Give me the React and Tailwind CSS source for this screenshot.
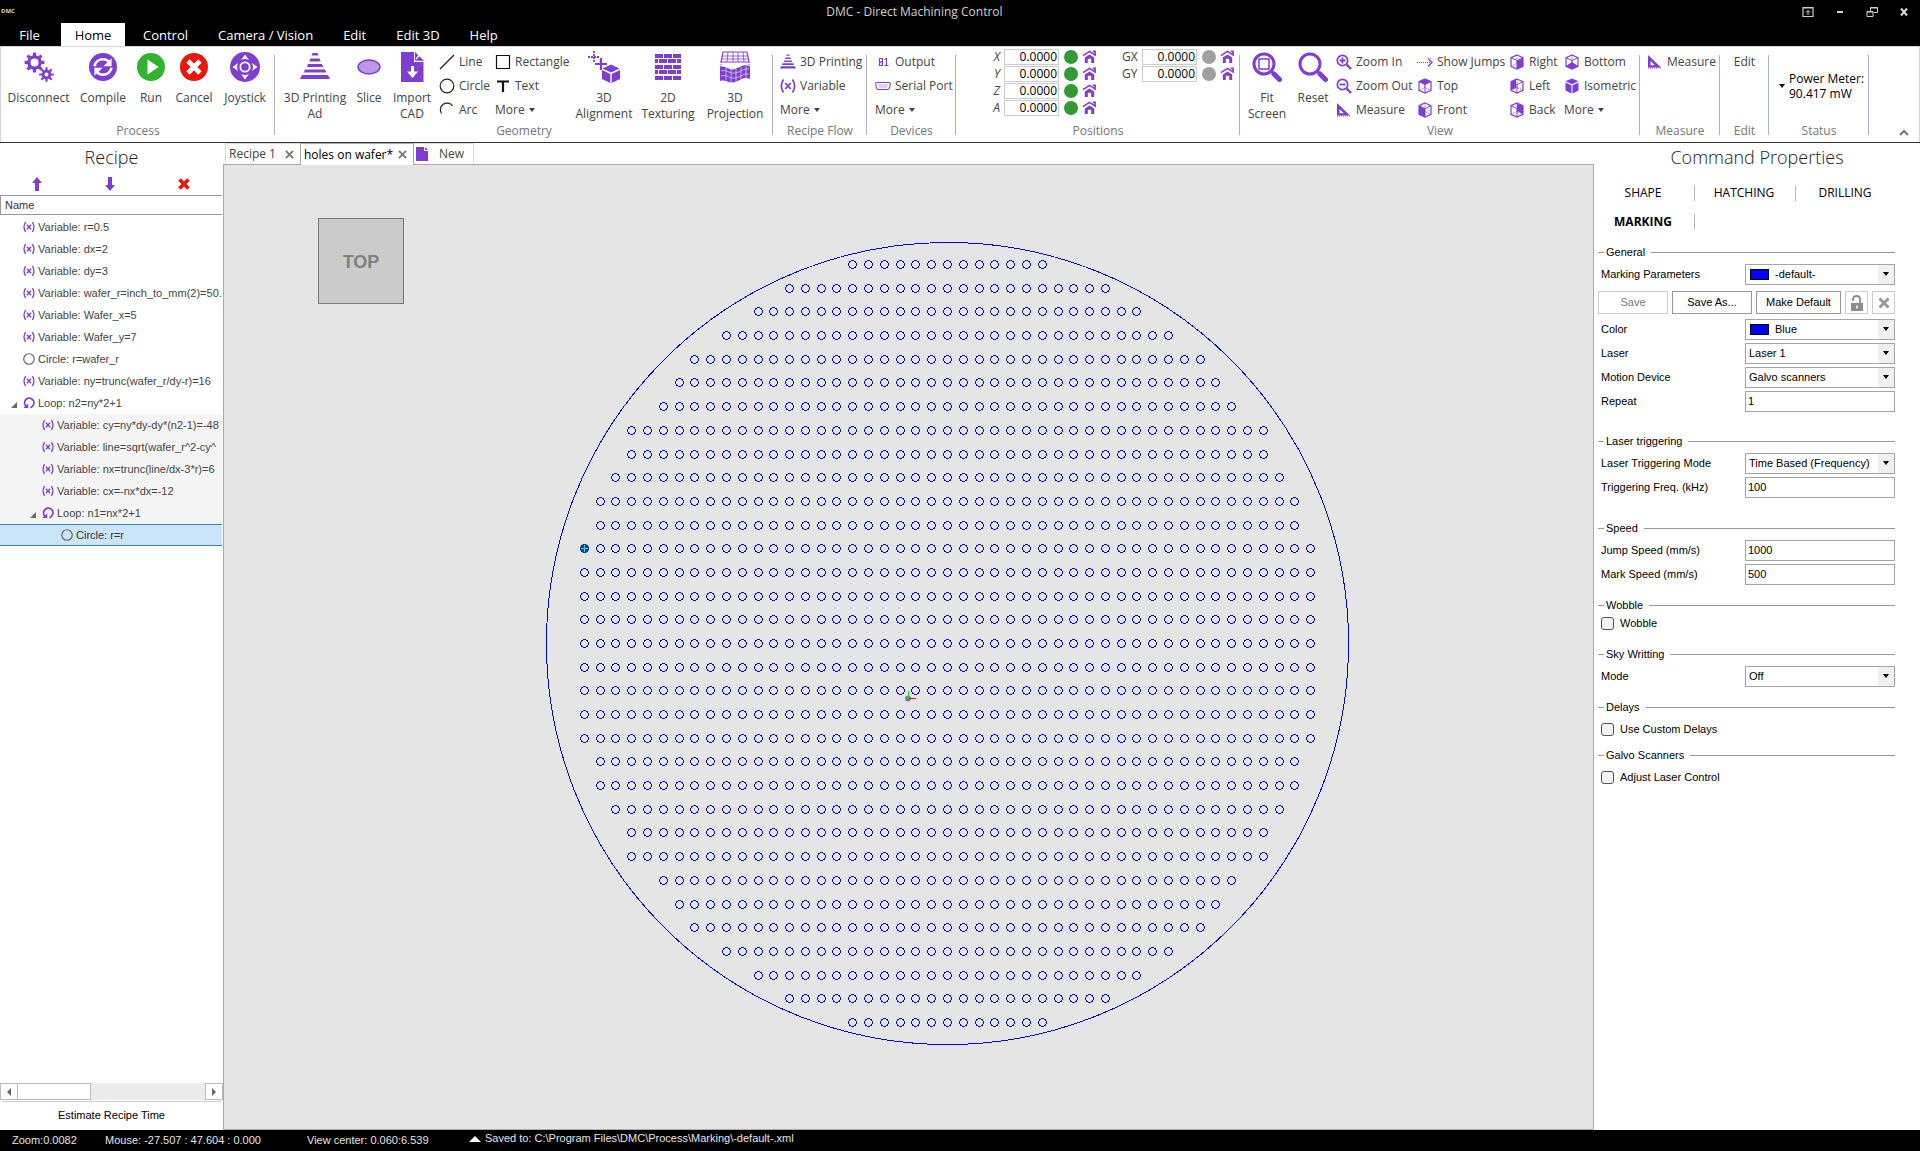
import React from "react";

const P = "#7e3fd0";

/* ---------- large ribbon icons ---------- */

function gearPath(cx, cy, rOuter, rInner, teeth) {
  const pts = [];
  const step = (Math.PI * 2) / teeth;
  for (let i = 0; i < teeth; i++) {
    const a = i * step - Math.PI / 2;
    [
      [-0.3, rInner],
      [-0.18, rOuter],
      [0.18, rOuter],
      [0.3, rInner],
    ].forEach(([o, r]) => {
      pts.push(`${(cx + Math.cos(a + o * step) * r).toFixed(2)} ${(cy + Math.sin(a + o * step) * r).toFixed(2)}`);
    });
  }
  return `M${pts.join("L")}Z`;
}

function Gears() {
  return (
    <svg viewBox="0 0 30 30" className="size-[30px]">
      <path d={`${gearPath(10.5, 10.5, 10, 7.2, 8)}M14.500 10.5a4 4 0 1 0 -8 0a4 4 0 1 0 8 0Z`} fill={P} fillRule="evenodd" />
      <path d={`${gearPath(22.5, 22.5, 7.4, 4.8, 8)}M24.500 22.5a2 2 0 1 0 -4 0a2 2 0 1 0 4 0Z`} fill={P} fillRule="evenodd" />
    </svg>
  );
}

function Compile() {
  return (
    <svg viewBox="0 0 30 30" className="size-[30px]">
      <circle cx="15" cy="15" r="14" fill={P} />
      <g fill="none" stroke="#fff" strokeWidth="2.6">
        <path d="M6.6 14.2C7.4 9.6 11 7.2 15 7.2c2.600 0 4.600 1 6.200 2.800" />
        <path d="M23.400 15.800C22.600 20.400 19 22.800 15 22.800c-2.600 0-4.600-1-6.200-2.800" />
      </g>
      <path d="M23.600 6.200v8h-8.200zM6.400 23.800v-8h8.200z" fill="#fff" />
    </svg>
  );
}

function Run() {
  return (
    <svg viewBox="0 0 30 30" className="size-[30px]">
      <circle cx="15" cy="15" r="14" fill="#33b133" />
      <path d="M11.500 7.500v15L22.500 15z" fill="#fff" />
    </svg>
  );
}

function Cancel() {
  return (
    <svg viewBox="0 0 30 30" className="size-[30px]">
      <circle cx="15" cy="15" r="14" fill="#e81709" />
      <path d="M9 9l12 12M21 9L9 21" stroke="#fff" strokeWidth="4.600" />
    </svg>
  );
}

function Joystick() {
  return (
    <svg viewBox="0 0 30 30" className="size-[30px]">
      <circle cx="15" cy="15" r="15" fill={P} />
      <circle cx="15" cy="15" r="4.700" fill="none" stroke="#fff" strokeWidth="1.800" />
      <path d="M15 2.500l4 5.500q-4-2-8 0zM15 27.500l4-5.500q-4 2-8 0zM2.500 15l5.500-4q-2 4 0 8zM27.500 15l-5.500-4q2 4 0 8z" fill="#fff" />
    </svg>
  );
}

function Cone({ size = "size-[30px]" }) {
  return (
    <svg viewBox="0 0 30 30" className={size}>
      <path d="M12.500 1h5l1 2.500h-7zM10.500 6.500h9l1.200 3h-11.400zM8 12h14l1.200 3h-16.400zM5 17.500h20l1.200 3h-22.400zM2 23h26l2 4h-30z" fill={P} />
    </svg>
  );
}

function Slice() {
  return (
    <svg viewBox="0 0 30 30" className="size-[30px]">
      <ellipse cx="15" cy="15" rx="11" ry="7" fill="#bd97e8" stroke={P} strokeWidth="1.400" />
    </svg>
  );
}

function ImportCad() {
  return (
    <svg viewBox="0 0 30 30" className="size-[30px]">
      <path d="M4 0h13v10h9.500v20H4z" fill={P} />
      <path d="M18 8.500V0L27 9z" fill={P} />
      <path d="M20.500 0l2.500 2.500-4 4.500M21 0l6 6.500" stroke="#fff" strokeWidth="1.200" fill="none" />
      <path d="M14 14h3v5.500h4L15.500 26 10 19.500h4z" fill="#fff" />
    </svg>
  );
}

function Align3D() {
  return (
    <svg viewBox="0 0 34 34" className="size-[34px]">
      <path d="M7 1v12M1 7h12" stroke={P} strokeWidth="1.800" strokeDasharray="2 1" />
      <path d="M14 8v12M8 14h12" stroke={P} strokeWidth="2.200" />
      <path d="M24 14.500l8.500 4-8.500 4-8.500-4z" fill={P} />
      <path d="M15 20l8.300 4v9L15 29zM33 20l-8.300 4v9L33 29z" fill={P} />
    </svg>
  );
}

function Bricks() {
  return (
    <svg viewBox="0 0 30 30" className="size-[30px]">
      <g fill={P} shapeRendering="crispEdges">
        {[0, 1, 2, 3, 4].map((r) =>
          (r % 2 === 0 ? [[2, 8], [11, 8], [20, 8]] : [[2, 3], [6, 8], [15, 8], [24, 4]]).map(([x, w]) => (
            <rect key={`${r}-${x}`} x={x} y={2 + r * 5 + Math.floor(r / 2)} width={w} height="4" />
          ))
        )}
      </g>
    </svg>
  );
}

function Projection() {
  return (
    <svg viewBox="0 0 34 34" className="size-[34px]">
      <path d="M5 2h24l2 10H3z" fill="none" stroke={P} strokeWidth="1.200" />
      <path d="M4 6h26M4 9h26M10 2l-1 10M15 2v10M20 2v10M25 2l1 10" stroke={P} strokeWidth="0.800" />
      <path d="M2 17c6-2 9 4 15 2s8-5 15-3v13c-6-3-9 1-15 3s-9-3-15-1z" fill={P} />
      <path d="M3 21c6-2 8 3 14 2s9-5 14-4M3 26c6-2 8 3 14 2s9-5 14-4M8 17v13M13 19v13M18 19v13M23 17v13M28 16v12" fill="none" stroke="#d9c6f2" strokeWidth="0.800" />
      <path d="M3 12v5M31 12v4" stroke={P} strokeDasharray="1 1" />
    </svg>
  );
}

function FitScreen() {
  return (
    <svg viewBox="0 0 30 30" className="size-[30px]">
      <circle cx="12" cy="12" r="10" fill="none" stroke={P} strokeWidth="3" />
      <rect x="7" y="7" width="10" height="10" fill="none" stroke={P} strokeWidth="1.500" />
      <path d="M19 19l2 2" stroke={P} strokeWidth="2.500" />
      <path d="M22 22l5.500 5.500" stroke={P} strokeWidth="5" strokeLinecap="round" />
    </svg>
  );
}

function Reset() {
  return (
    <svg viewBox="0 0 30 30" className="size-[30px]">
      <circle cx="12" cy="12" r="10" fill="none" stroke={P} strokeWidth="3" />
      <path d="M19 19l2 2" stroke={P} strokeWidth="2.500" />
      <path d="M22 22l5.500 5.500" stroke={P} strokeWidth="5" strokeLinecap="round" />
    </svg>
  );
}

/* ---------- small icons ---------- */

function Svg16({ children, className = "size-4" }) {
  return (
    <svg viewBox="0 0 16 16" className={`${className} shrink-0`} fill="none">
      {children}
    </svg>
  );
}
const LineI = () => <Svg16><path d="M1 15L15 1" stroke="#222" strokeWidth="1.300" /></Svg16>;
const CircleI = () => <Svg16><circle cx="8" cy="8" r="6.800" stroke="#222" strokeWidth="1.200" /></Svg16>;
const ArcI = () => <Svg16><path d="M2.500 11.500A6.500 6.500 0 0 1 13.500 4" stroke="#222" strokeWidth="1.200" /></Svg16>;
const RectI = () => <Svg16><path d="M1.500 1.500h13v13h-13z" stroke="#111" strokeWidth="1.200" /></Svg16>;
const TextI = () => <Svg16><path d="M2 3.500h12M8 3v11" stroke="#111" strokeWidth="2.200" /></Svg16>;
const ConeI = () => <Cone size="size-4" />;
const VarI = ({ className }) => (
  <Svg16 className={className}>
    <path d="M3.500 1.500Q-0.800 8 3.500 14.500M12.500 1.500Q16.800 8 12.500 14.500" stroke={P} strokeWidth="1.700" />
    <path d="M5.200 5l5.600 6M10.800 5l-5.600 6" stroke={P} strokeWidth="1.800" />
  </Svg16>
);
const OutputI = () => (
  <Svg16>
    <path d="M4.500 4.500h3v7h-3zM4.500 9l3-2M9.500 5.500l2-1v7M9.500 11.500h4" stroke={P} strokeWidth="1.200" />
  </Svg16>
);
const SerialI = () => (
  <Svg16>
    <path d="M2 4.500h12q1.500 0 1.300 1.500l-.8 4q-.300 1.500-2 1.500h-9q-1.700 0-2-1.500l-.8-4q-.200-1.500 1.300-1.500z" stroke={P} strokeWidth="1.100" />
    <path d="M3.500 7h9M4.500 9h7" stroke={P} strokeWidth="1" strokeDasharray="1 1" />
  </Svg16>
);
const Zoomer = ({ plus }) => (
  <Svg16>
    <circle cx="6.500" cy="6.500" r="5.200" stroke={P} strokeWidth="1.700" />
    <path d={plus ? "M3.500 6.500h6M6.500 3.500v6" : "M3.500 6.500h6"} stroke={P} strokeWidth="1.800" />
    <path d="M10.500 10.500l4.500 4.500" stroke={P} strokeWidth="2.400" />
  </Svg16>
);
const MeasureI = () => (
  <Svg16>
    <path d="M1 1v12.500h13z M3.500 7v4.200h4.300z" fill={P} fillRule="evenodd" />
    <path d="M1 14h14" stroke={P} strokeDasharray="1 1" />
  </Svg16>
);
const JumpI = () => (
  <Svg16>
    <path d="M0 8.500h13" stroke={P} strokeWidth="1" strokeDasharray="1 1" />
    <path d="M11 4.500l4 4-4 4" stroke={P} strokeWidth="1.300" />
  </Svg16>
);
const CUBE_FACES = {
  top: ["M8 1l6 2.500-6 3-6-3z"],
  front: ["M2 4l6 3v8l-6-3z"],
  right: ["M14 4L8 7v8l6-3z"],
  left: ["M2 4l5-3v9l-5 2z"],
  back: ["M8 1.500l6 2.500v8l-6-3z"],
  bottom: ["M8 8l6 4-6 3-6-3z"],
  iso: ["M8 0.500l6.500 2.800L8 6.200 1.500 3.300z", "M1.500 4.500l6 2.800V15.500l-6-3z", "M14.500 4.500l-6 2.800V15.500l6-3z"],
};
const CubeI = ({ face }) => (
  <Svg16>
    {face !== "iso" && (
      <>
        <path d="M8 1l6 2.700v8.600L8 15l-6-2.700V3.700z" stroke={P} strokeWidth="1.200" />
        <path d="M2 3.700l6 2.800 6-2.800M8 6.500V15" stroke={P} strokeWidth="1" />
        <path d="M2 12.300L8 9.500l6 2.800M8 1v8.500" stroke={P} strokeWidth="0.800" strokeDasharray="1.500 1" />
      </>
    )}
    {CUBE_FACES[face].map((d) => <path key={d} d={d} fill={P} />)}
  </Svg16>
);
const HomeI = () => (
  <Svg16 className="size-[15px]">
    <path d="M1 7L8 2.500 15 7M11.500 2.500H14V6" stroke={P} strokeWidth="1.700" />
    <path d="M3 9l5-3.200L13 9v6h-3.200v-4.500H6.200V15H3z" fill={P} />
  </Svg16>
);
const LoopI = () => (
  <Svg16 className="size-3">
    <path d="M4.800 13A6.300 6.300 0 1 1 12.500 12.500L10 14.500" stroke={P} strokeWidth="2.200" />
    <path d="M0.500 14.800h6.500V8.500z" fill={P} />
  </Svg16>
);
const Caret = ({ className = "" }) => (
  <svg viewBox="0 0 6 4" className={`h-1 w-1.5 shrink-0 ${className}`}><path d="M0 0h6L3 4z" fill="currentColor" /></svg>
);

/* ---------- ribbon pieces ---------- */

function Group({ label, width, pad = "", children }) {
  return (
    <section aria-label={label} className={`relative flex shrink-0 flex-col ${width}`}>
      <div className={`flex h-[76px] pt-[3px] ${pad}`}>{children}</div>
      <div className="text-center text-[12px] leading-4 text-[#777]">{label}</div>
      <div className="absolute top-2 right-0 h-20 w-px bg-[#a3b3d1]" />
    </section>
  );
}

function Big({ icon: Icon, lines, width }) {
  return (
    <button type="button" className={`flex h-[72px] shrink-0 flex-col items-center ${width}`}>
      <span className="flex h-[34px] items-center justify-center"><Icon /></span>
      <span className="mt-[6px] text-[12px] leading-4 whitespace-nowrap">
        {lines.map((l) => <span key={l} className="block">{l}</span>)}
      </span>
    </button>
  );
}

function Small({ icon, label }) {
  return (
    <button type="button" className="flex h-6 items-center gap-1 text-[12px] whitespace-nowrap">
      {icon}
      <span>{label}</span>
      {label === "More" && <Caret />}
    </button>
  );
}

function Column({ width, children }) {
  return <div className={`flex shrink-0 flex-col items-start ${width}`}>{children}</div>;
}

function Axis({ name, italic, on, labelWidth }) {
  const id = `axis-${name}`;
  return (
    <div className="flex h-[17px] items-center">
      <label htmlFor={id} className={`text-[12px] leading-4 ${labelWidth} ${italic ? "pr-1 text-right italic" : ""}`}>{name}</label>
      <input id={id} defaultValue="0.0000" className="h-4 w-[55px] border border-[#ccc] bg-white pr-px text-right text-[12px] text-black outline-none" />
      <span className={`mr-1 ml-[5px] size-[14px] rounded-full ${on ? "bg-[#339933]" : "bg-[#a0a0a0]"}`} />
      <button type="button" aria-label={`Home ${name}`}><HomeI /></button>
    </div>
  );
}

function Ribbon() {
  return (
    <div className="flex h-24 shrink-0 border border-b-0 border-[#d5d5d5] bg-white text-[#444]">
      <Group label="Process" width="w-[274px]" pad="pl-[5px]">
        <Big icon={Gears} lines={["Disconnect"]} width="w-[65px]" />
        <Big icon={Compile} lines={["Compile"]} width="w-16" />
        <Big icon={Run} lines={["Run"]} width="w-8" />
        <Big icon={Cancel} lines={["Cancel"]} width="w-[54px]" />
        <Big icon={Joystick} lines={["Joystick"]} width="w-12" />
      </Group>
      <Group label="Geometry" width="w-[498px]" pad="pl-2">
        <Big icon={Cone} lines={["3D Printing", "Ad"]} width="w-16" />
        <Big icon={Slice} lines={["Slice"]} width="w-11" />
        <Big icon={ImportCad} lines={["Import", "CAD"]} width="w-[42px]" />
        <Column width="w-14 ml-1.5">
          <Small icon={<LineI />} label="Line" />
          <Small icon={<CircleI />} label="Circle" />
          <Small icon={<ArcI />} label="Arc" />
        </Column>
        <Column width="w-20">
          <Small icon={<RectI />} label="Rectangle" />
          <Small icon={<TextI />} label="Text" />
          <Small label="More" />
        </Column>
        <Big icon={Align3D} lines={["3D", "Alignment"]} width="w-[58px]" />
        <Big icon={Bricks} lines={["2D", "Texturing"]} width="w-[70px]" />
        <Big icon={Projection} lines={["3D", "Projection"]} width="w-16" />
      </Group>
      <Group label="Recipe Flow" width="w-[94px]" pad="pl-[7px]">
        <Column width="w-20">
          <Small icon={<ConeI />} label="3D Printing" />
          <Small icon={<VarI className="size-4" />} label="Variable" />
          <Small label="More" />
        </Column>
      </Group>
      <Group label="Devices" width="w-[89px]" pad="pl-2">
        <Column width="w-20">
          <Small icon={<OutputI />} label="Output" />
          <Small icon={<SerialI />} label="Serial Port" />
          <Small label="More" />
        </Column>
      </Group>
      <Group label="Positions" width="w-[284px]" pad="pl-8">
        <div className="-mt-0.5">
          <Axis name="X" italic on labelWidth="w-4" />
          <Axis name="Y" italic on labelWidth="w-4" />
          <Axis name="Z" italic on labelWidth="w-4" />
          <Axis name="A" italic on labelWidth="w-4" />
        </div>
        <div className="-mt-0.5 ml-[25px]">
          <Axis name="GX" labelWidth="w-5" />
          <Axis name="GY" labelWidth="w-5" />
        </div>
      </Group>
      <Group label="View" width="w-[400px]" pad="pl-1">
        <Big icon={FitScreen} lines={["Fit", "Screen"]} width="w-[46px]" />
        <Big icon={Reset} lines={["Reset"]} width="w-[46px]" />
        <Column width="w-[81px]">
          <Small icon={<Zoomer plus />} label="Zoom In" />
          <Small icon={<Zoomer />} label="Zoom Out" />
          <Small icon={<MeasureI />} label="Measure" />
        </Column>
        <Column width="w-[92px]">
          <Small icon={<JumpI />} label="Show Jumps" />
          <Small icon={<CubeI face="top" />} label="Top" />
          <Small icon={<CubeI face="front" />} label="Front" />
        </Column>
        <Column width="w-[55px]">
          <Small icon={<CubeI face="right" />} label="Right" />
          <Small icon={<CubeI face="left" />} label="Left" />
          <Small icon={<CubeI face="back" />} label="Back" />
        </Column>
        <Column width="w-[72px]">
          <Small icon={<CubeI face="bottom" />} label="Bottom" />
          <Small icon={<CubeI face="iso" />} label="Isometric" />
          <Small label="More" />
        </Column>
      </Group>
      <Group label="Measure" width="w-20" pad="pl-[7px]">
        <Column width="w-16">
          <Small icon={<MeasureI />} label="Measure" />
        </Column>
      </Group>
      <Group label="Edit" width="w-[49px]">
        <div className="flex w-full items-start justify-center"><Small label="Edit" /></div>
      </Group>
      <Group label="Status" width="w-[100px]" pad="pl-[10px]">
        <button type="button" className="mt-[18px] flex h-9 items-center gap-1 text-left text-[12px] leading-[15px] whitespace-nowrap text-black">
          <Caret />
          <span>Power Meter:<br />90.417 mW</span>
        </button>
      </Group>
      <div className="flex grow items-end justify-end pr-[10px] pb-[5px]">
        <button type="button" aria-label="Collapse ribbon" className="text-[#777]">
          <svg viewBox="0 0 10 10" className="size-[10px]"><path d="M1 8l4-4 4 4" fill="none" stroke="currentColor" strokeWidth="2" /></svg>
        </button>
      </div>
    </div>
  );
}

function TitleBar() {
  return (
    <header className="flex h-[23px] shrink-0 items-center bg-black text-[#d0d0d0]">
      <span className="pl-px text-[6px] font-bold">DMC</span>
      <h1 className="grow pl-3 text-center text-[12px]">DMC - Direct Machining Control</h1>
      <div className="flex justify-end gap-5 pr-[10px]">
        <button type="button" aria-label="Ribbon display options">
          <svg viewBox="0 0 12 12" className="size-3" fill="none" stroke="currentColor"><path d="M1 1.500h10v9H1z" strokeWidth="1.200" /><path d="M1 2h10M6 9V4.500M4 6.500l2-2 2 2" /></svg>
        </button>
        <button type="button" aria-label="Minimize">
          <svg viewBox="0 0 12 12" className="size-3"><path d="M3 6h6" stroke="currentColor" strokeWidth="2" /></svg>
        </button>
        <button type="button" aria-label="Restore">
          <svg viewBox="0 0 12 12" className="size-3" fill="none" stroke="currentColor"><path d="M1 5.500h6v5H1zM1 6h6M4.500 5V1.500h7v5H7.500M4.500 2h7" /></svg>
        </button>
        <button type="button" aria-label="Close">
          <svg viewBox="0 0 12 12" className="size-3"><path d="M3 2.500l6 7M9 2.500l-6 7" stroke="currentColor" strokeWidth="2.200" /></svg>
        </button>
      </div>
    </header>
  );
}

function MenuTabs() {
  const items = ["Control", "Camera / Vision", "Edit", "Edit 3D", "Help"];
  return (
    <nav className="flex h-[23px] shrink-0 bg-black text-[13px] leading-6 text-white">
      <button type="button" className="w-[61px] pr-0.5 pb-1">File</button>
      <button type="button" className="mr-[3px] w-16 bg-white text-black">Home</button>
      {items.map((t) => <button type="button" key={t} className="px-[15px] whitespace-nowrap">{t}</button>)}
    </nav>
  );
}

/* ---------- recipe panel ---------- */

const ROWS = [
  ["var", 0, "Variable: r=0.5"],
  ["var", 0, "Variable: dx=2"],
  ["var", 0, "Variable: dy=3"],
  ["var", 0, "Variable: wafer_r=inch_to_mm(2)=50."],
  ["var", 0, "Variable: Wafer_x=5"],
  ["var", 0, "Variable: Wafer_y=7"],
  ["circle", 0, "Circle: r=wafer_r"],
  ["var", 0, "Variable: ny=trunc(wafer_r/dy-r)=16"],
  ["loop", 0, "Loop: n2=ny*2+1"],
  ["var", 1, "Variable: cy=ny*dy-dy*(n2-1)=-48"],
  ["var", 1, "Variable: line=sqrt(wafer_r^2-cy^"],
  ["var", 1, "Variable: nx=trunc(line/dx-3*r)=6"],
  ["var", 1, "Variable: cx=-nx*dx=-12"],
  ["loop", 1, "Loop: n1=nx*2+1"],
  ["circle", 2, "Circle: r=r"],
];
const INDENT = ["pl-[11px]", "pl-[30px]", "pl-[49px]"];

function RecipePanel() {
  return (
    <aside className="flex w-[223px] shrink-0 flex-col bg-white">
      <h2 className="h-[29px] text-center text-[18px] leading-[29px] font-light text-[#222]">Recipe</h2>
      <div className="grid h-[23px] grid-cols-3 place-items-center pr-[2px]">
        <button type="button" aria-label="Move up"><svg viewBox="0 0 12 14" className="h-[14px] w-3"><path d="M6 0l5 6H8v8H4V6H1z" fill={P} /></svg></button>
        <button type="button" aria-label="Move down"><svg viewBox="0 0 12 14" className="h-[14px] w-3"><path d="M6 14l5-6H8V0H4v8H1z" fill={P} /></svg></button>
        <button type="button" aria-label="Delete"><svg viewBox="0 0 14 14" className="h-[14px] w-[14px]"><path d="M2.500 2.500l9 9M11.500 2.500l-9 9" stroke="#e81709" strokeWidth="3.600" /></svg></button>
      </div>
      <div className="mr-px h-5 border border-r-0 border-[#999] pl-1 text-[11px] leading-[18px] text-[#333]">Name</div>
      <ul role="tree" aria-label="Recipe" className="mr-px min-h-0 grow pt-px">
        {ROWS.map(([kind, level, text]) => {
          const selected = level === 2;
          return (
            <li
              key={text}
              role="treeitem"
              aria-selected={selected}
              className={`flex h-[22px] items-center border-y text-[11px] whitespace-nowrap ${INDENT[level]} ${selected ? "border-[#2a84d2] bg-[#cce4f7] text-[#333]" : level === 1 ? "border-transparent bg-[#f5f5f5] text-[#444]" : "border-transparent text-[#444]"}`}
            >
              <span className="flex w-3 shrink-0 justify-start pt-1">
                {kind === "loop" && <svg viewBox="0 0 6 6" className="size-1.5"><path d="M6 0v6H0z" fill="#666" /></svg>}
              </span>
              <span className="mr-[3px] flex w-3 shrink-0">
                {kind === "var" && <VarI className="size-3" />}
                {kind === "loop" && <LoopI />}
                {kind === "circle" && <Svg16 className="size-3"><circle cx="8" cy="8" r="7" stroke="#666" strokeWidth="1.600" /></Svg16>}
              </span>
              {text}
            </li>
          );
        })}
      </ul>
      <div className="flex h-[17px] bg-[#ebebeb]">
        <button type="button" aria-label="Scroll left" className="flex w-[18px] items-center justify-center border border-[#bbb] bg-white">
          <svg viewBox="0 0 4 8" className="h-2 w-1"><path d="M4 0v8L0 4z" fill="#666" /></svg>
        </button>
        <div className="w-[73px] border border-l-0 border-[#bbb] bg-white" />
        <button type="button" aria-label="Scroll right" className="ml-auto flex w-[18px] items-center justify-center border border-[#bbb] bg-white">
          <svg viewBox="0 0 4 8" className="h-2 w-1"><path d="M0 0v8l4-4z" fill="#666" /></svg>
        </button>
      </div>
      <button type="button" className="mx-[2px] mt-px h-[29px] border-t border-[#ccc] pb-[2px] text-[11px] text-black">Estimate Recipe Time</button>
    </aside>
  );
}

/* ---------- work area ---------- */

const SCALE = 7.895;
const WAFER_R = 50.8;
const CENTER = { x: 947.5, y: 643.5 };

/* Hole centres snap to half pixels so that each ring keeps a closed outline. */
const snap = (v) => Math.floor(v) + 0.5;

function holes() {
  const out = [];
  for (let row = -16; row <= 16; row++) {
    const cy = row * 3;
    const nx = Math.trunc(Math.sqrt(WAFER_R ** 2 - cy ** 2) / 2 - 1.5);
    for (let i = -nx; i <= nx; i++) out.push([snap(CENTER.x + i * 2 * SCALE), snap(CENTER.y + cy * SCALE)]);
  }
  return out;
}
const HOLES = holes();

function CloseX() {
  return <svg viewBox="0 0 10 10" className="size-[9px]"><path d="M1 1l8 8M9 1L1 9" stroke="#777" strokeWidth="2" /></svg>;
}

function Workspace() {
  return (
    <main className="flex min-w-0 grow flex-col bg-white">
      <div className="flex h-[21px] shrink-0 pl-[2px] text-[12px] text-[#444]">
        <div className="flex w-[75px] items-center justify-between border-t border-l border-[#ddd] pr-1.5 pl-[3px]">
          <button type="button">Recipe 1</button>
          <button type="button" aria-label="Close Recipe 1"><CloseX /></button>
        </div>
        <div className="relative z-10 -mb-px flex w-[114px] items-center justify-between border border-b-0 border-[#aaa] bg-white pr-1.5 pl-[3px] text-black">
          <button type="button">holes on wafer*</button>
          <button type="button" aria-label="Close holes on wafer"><CloseX /></button>
        </div>
        <button type="button" className="flex items-center gap-[11px] border-t border-r border-[#ddd] pr-[9px] pl-[2px]">
          <svg viewBox="0 0 12 14" className="h-[14px] w-3"><path d="M0 0h8v4h4v10H0z" fill={P} /><path d="M9 0l3 3H9z" fill={P} /></svg>
          New
        </button>
      </div>
      <div className="relative min-h-0 grow border border-[#aaa] bg-[#e5e5e5]">
        <svg viewBox="224 165 1369 964" className="absolute inset-0 h-full w-full" role="img" aria-label="Holes on wafer">
          <g fill="none" stroke="#0000f0" strokeWidth="1" shapeRendering="crispEdges">
            <circle cx={CENTER.x} cy={CENTER.y} r={WAFER_R * SCALE} />
            {HOLES.map(([x, y]) => <circle key={`${x} ${y}`} cx={x} cy={y} r="3.900" />)}
          </g>
          <circle cx="584.500" cy="548.500" r="4.500" fill="#1c3f8c" />
          <path d="M581 548.500h7M584.500 545v7" stroke="#2fe0e0" />
          <circle cx="908" cy="698.500" r="3" fill="#808080" />
          <path d="M908.500 697v-6" stroke="#00ff00" />
          <path d="M909 698.500h7" stroke="#ff0000" />
        </svg>
        <button type="button" className="absolute top-[53px] left-[94px] size-[86px] border border-[#777] bg-[#cbcbcb] pt-[2px] font-[Liberation_Sans] text-[18px] font-bold text-[#808080]">TOP</button>
      </div>
    </main>
  );
}

/* ---------- properties panel ---------- */

function Section({ title, className = "", children }) {
  return (
    <fieldset className={`flex flex-col ${className}`}>
      <legend className="flex h-5 w-full items-center gap-[2px] text-[11px] leading-5 text-black">
        <span className="h-px w-[6px] bg-[#999]" />
        <span>{title}</span>
        <span className="ml-1 h-px grow bg-[#999]" />
      </legend>
      {children}
    </fieldset>
  );
}

function Row({ id, label, children }) {
  return (
    <div className="flex h-6 items-center pl-[3px]">
      <label htmlFor={id} className="grow text-[11px]">{label}</label>
      <div className="relative h-[21px] w-[150px] shrink-0">{children}</div>
    </div>
  );
}

function SelectRow({ id, label, value, swatch }) {
  return (
    <Row id={id} label={label}>
      <select id={id} className={`block h-[21px] w-full appearance-none border border-[#a5a5a5] bg-white text-[11px] leading-[19px] text-black outline-none ${swatch ? "pl-[29px]" : "pl-[3px]"}`}>
        <option>{value}</option>
      </select>
      {swatch && <span className="pointer-events-none absolute top-[5px] left-[5px] h-[11px] w-[19px] border border-black bg-[#0000ff]" />}
      <span className="pointer-events-none absolute top-px right-px flex h-[19px] w-4 items-center justify-center bg-[#f0f0f0] text-black">
        <Caret />
      </span>
    </Row>
  );
}

function TextRow({ id, label, value }) {
  return (
    <Row id={id} label={label}>
      <input id={id} defaultValue={value} className="block h-[21px] w-full border border-[#a5a5a5] bg-white pl-[2px] text-[11px] leading-[19px] text-black outline-none" />
    </Row>
  );
}

function Check({ id, label }) {
  return (
    <div className="flex h-[17px] items-center gap-[6px] pl-[3px]">
      <input id={id} type="checkbox" className="size-[13px] appearance-none rounded-[3px] border border-[#555] bg-[#f3f3f3]" />
      <label htmlFor={id} className="text-[11px]">{label}</label>
    </div>
  );
}

function Properties() {
  const tabs = ["SHAPE", "HATCHING", "DRILLING", "MARKING"];
  return (
    <aside className="w-[326px] shrink-0 bg-white text-black">
      <h2 className="h-[35px] text-center text-[18px] leading-[29px] font-light text-[#222]">Command Properties</h2>
      <div role="tablist" className="grid w-[303px] grid-cols-3">
        {tabs.map((t) => (
          <button
            key={t}
            type="button"
            role="tab"
            aria-selected={t === "MARKING"}
            className={`relative h-[29px] pr-[3px] text-[12px] ${t === "MARKING" ? "font-bold" : ""}`}
          >
            {t}
            {t !== "DRILLING" && <span className="absolute top-[7px] right-0 h-4 w-px bg-[#bbb]" />}
          </button>
        ))}
      </div>
      <div className="mr-[25px] ml-1">
        <Section title="General" className="mt-[6px]">
          <SelectRow id="params" label="Marking Parameters" value="-default-" swatch />
          <div className="mt-[5px] mb-[3px] flex h-[23px] gap-1 text-[11px]">
            <button type="button" disabled className="w-[70px] border border-[#ccc] text-[#777]">Save</button>
            <button type="button" className="grow border border-[#999]">Save As...</button>
            <button type="button" className="w-[85px] border border-[#999]">Make Default</button>
            <button type="button" aria-label="Unlock" className="flex w-[23px] items-center justify-center border border-[#ccc]">
              <svg viewBox="0 0 14 16" className="h-4 w-[14px]"><path d="M3 6V4Q3 1 6.500 1T10 4v4" fill="none" stroke="#8d8d8d" strokeWidth="1.800" /><path d="M1 8h12v8H1z" fill="#8d8d8d" /><path d="M7 10.500v3" stroke="#fff" strokeWidth="1.600" /></svg>
            </button>
            <button type="button" aria-label="Delete parameters" className="flex w-[23px] items-center justify-center border border-[#ccc]">
              <svg viewBox="0 0 12 12" className="size-3"><path d="M1.500 1.500l9 9M10.500 1.500l-9 9" stroke="#999" strokeWidth="3" /></svg>
            </button>
          </div>
          <SelectRow id="color" label="Color" value="Blue" swatch />
          <SelectRow id="laser" label="Laser" value="Laser 1" />
          <SelectRow id="motion" label="Motion Device" value="Galvo scanners" />
          <TextRow id="repeat" label="Repeat" value="1" />
        </Section>
        <Section title="Laser triggering" className="mt-[18px]">
          <SelectRow id="trigger" label="Laser Triggering Mode" value="Time Based (Frequency)" />
          <TextRow id="freq" label="Triggering Freq. (kHz)" value="100" />
        </Section>
        <Section title="Speed" className="mt-[19px]">
          <TextRow id="jump" label="Jump Speed (mm/s)" value="1000" />
          <TextRow id="mark" label="Mark Speed (mm/s)" value="500" />
        </Section>
        <Section title="Wobble" className="mt-[9px]">
          <Check id="wobble" label="Wobble" />
        </Section>
        <Section title="Sky Writting" className="mt-3">
          <SelectRow id="sky" label="Mode" value="Off" />
        </Section>
        <Section title="Delays" className="mt-[9px]">
          <div className="pt-1"><Check id="delays" label="Use Custom Delays" /></div>
        </Section>
        <Section title="Galvo Scanners" className="mt-[7px]">
          <div className="pt-1"><Check id="adjust" label="Adjust Laser Control" /></div>
        </Section>
      </div>
    </aside>
  );
}

function StatusBar() {
  return (
    <footer className="flex h-[21px] shrink-0 items-center bg-black pl-3 text-[11px] whitespace-nowrap text-[#e5e5e5]">
      <span className="w-[93px]">Zoom:0.0082</span>
      <span className="w-[202px]">Mouse: -27.507 : 47.604 : 0.000</span>
      <span className="w-[162px]">View center: 0.060:6.539</span>
      <span className="flex items-center gap-1 pb-1">
        <svg viewBox="0 0 12 6" className="h-1.5 w-3"><path d="M6 0l6 6H0z" fill="#fff" /></svg>
        Saved to: C:\Program Files\DMC\Process\Marking\-default-.xml
      </span>
    </footer>
  );
}

export default function App() {
  return (
    <div className="flex h-screen flex-col overflow-hidden bg-white font-['Open_Sans','Noto_Sans',sans-serif]">
      <TitleBar />
      <MenuTabs />
      <Ribbon />
      <div className="h-px shrink-0 bg-[#333]" />
      <div className="flex min-h-0 grow">
        <div className="flex font-['Liberation_Sans',Arial,sans-serif] [&_h2]:font-['Open_Sans']"><RecipePanel /></div>
        <Workspace />
        <div className="flex font-['Liberation_Sans',Arial,sans-serif] [&_[role=tab]]:font-['Open_Sans'] [&_h2]:font-['Open_Sans']"><Properties /></div>
      </div>
      <div className="shrink-0 font-['Liberation_Sans',Arial,sans-serif]"><StatusBar /></div>
    </div>
  );
}
